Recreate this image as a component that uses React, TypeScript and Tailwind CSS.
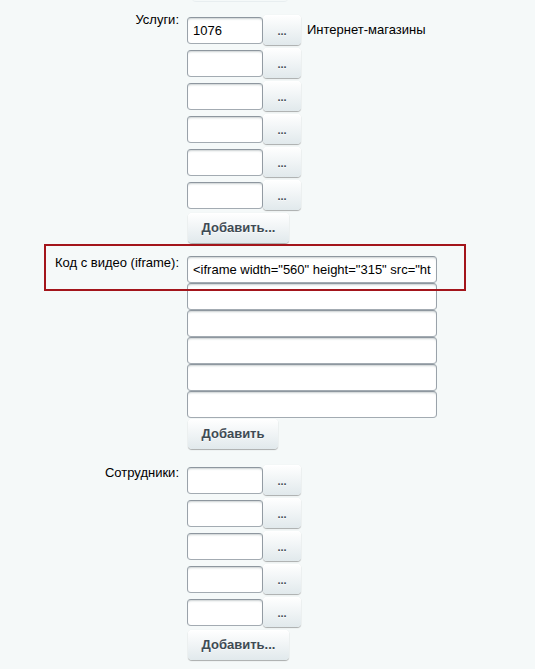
import React from "react";

const font = { fontFamily: '"Liberation Sans", Arial, sans-serif' };

const inputCls =
  "h-[27px] bg-white rounded-[4px] border border-solid border-t-[#8e979f] border-x-[#9aa2aa] border-b-[#a3abb2] shadow-[inset_0_2px_2px_-1px_rgba(180,188,191,0.7)] px-[5px] text-[13px] text-black outline-none";

const btnCls =
  "h-[30px] rounded-[4px] bg-[linear-gradient(to_bottom,#ffffff,#e1e9ec)] shadow-[0_0_1px_rgba(0,0,0,0.11),0_1px_1px_rgba(0,0,0,0.3),inset_0_1px_#fff] text-[#3f4b54] font-bold text-[13px] [text-shadow:0_1px_rgba(255,255,255,0.7)] flex items-center justify-center";

function PickRow({ value, extra }: { value?: string; extra?: string }) {
  return (
    <div className="flex items-center h-[30px]">
      <input className={`${inputCls} w-[76px]`} defaultValue={value ?? ""} />
      <button className={`${btnCls} w-[38px]`}>
        <span className="text-[11px] font-bold leading-none pt-[3px] text-[#3f4b54]">...</span>
      </button>
      {extra && <span className="ml-[6px] text-[13px] text-black">{extra}</span>}
    </div>
  );
}

export default function App() {
  return (
    <div className="relative min-h-[669px] w-[535px] bg-[#f5f9f9] overflow-hidden" style={font}>
      <div className="absolute left-[192px] top-[-6px] w-[96px] h-[8px] rounded-b-[4px] border-b border-[#e8eef0]" />
      <div className="pt-[12px]">
        {/* Услуги */}
        <div className="flex">
          <div className="w-[179px] text-right text-[13px] leading-[16px] text-black">Услуги:</div>
          <div className="ml-[8px] pt-[3px] flex flex-col gap-[3px]">
            <PickRow value="1076" extra="Интернет-магазины" />
            <PickRow />
            <PickRow />
            <PickRow />
            <PickRow />
            <PickRow />
            <button className={`${btnCls} w-[101px] ml-[1px]`}>Добавить...</button>
          </div>
        </div>

        {/* iframe */}
        <div className="flex mt-[11px]">
          <div className="w-[179px] pt-[1px] text-right text-[13px] leading-[16px] text-black">
            Код с видео (iframe):
          </div>
          <div className="ml-[8px] pt-[2px] flex flex-col">
            <input
              className={`${inputCls} w-[250px]`}
              defaultValue={'<iframe width="560" height="315" src="https://www.youtube.com/embed/'}
            />
            <input className={`${inputCls} w-[250px]`} />
            <input className={`${inputCls} w-[250px]`} />
            <input className={`${inputCls} w-[250px]`} />
            <input className={`${inputCls} w-[250px]`} />
            <input className={`${inputCls} w-[250px]`} />
            <button className={`${btnCls} w-[90px] ml-[1px] mt-[1px]`}>Добавить</button>
          </div>
        </div>

        {/* Сотрудники */}
        <div className="flex mt-[16px]">
          <div className="w-[179px] text-right text-[13px] leading-[16px] text-black">Сотрудники:</div>
          <div className="ml-[8px] flex flex-col gap-[3px]">
            <PickRow />
            <PickRow />
            <PickRow />
            <PickRow />
            <PickRow />
            <button className={`${btnCls} w-[101px] ml-[1px]`}>Добавить...</button>
          </div>
        </div>
      </div>

      {/* red highlight annotation */}
      <div className="absolute left-[44px] top-[244px] w-[422px] h-[47px] border-2 border-[#a3151b] pointer-events-none" />
    </div>
  );
}
